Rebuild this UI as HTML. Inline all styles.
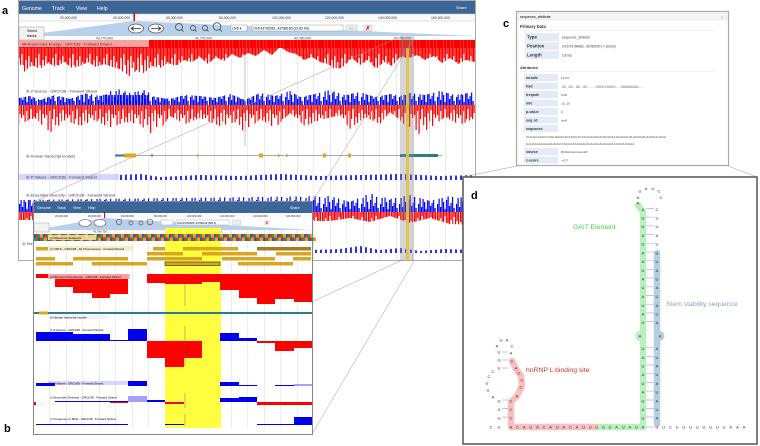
<!DOCTYPE html>
<html><head><meta charset="utf-8"><style>
html,body{margin:0;padding:0;background:#fff;width:760px;height:446px;overflow:hidden}
svg{display:block;font-family:"Liberation Sans",sans-serif}
</style></head><body>
<svg width="760" height="446" viewBox="0 0 760 446" xmlns="http://www.w3.org/2000/svg">
<defs>
<pattern id="pr" width="3" height="10" patternUnits="userSpaceOnUse"><rect width="3" height="10" fill="#ff7070"/><rect width="2" height="10" fill="#f00"/></pattern>
<pattern id="pb" width="3" height="10" patternUnits="userSpaceOnUse"><rect width="3" height="10" fill="#8c8cff"/><rect width="2" height="10" fill="#0000ee"/></pattern>
<pattern id="pm" x="0" y="40" width="17" height="60" patternUnits="userSpaceOnUse">
<g fill="#f00"><rect x="0" width="1.2" height="30"/><rect x="1.4" width="1.2" height="18"/><rect x="2.8" width="1.2" height="37"/><rect x="4.2" width="1.2" height="14"/><rect x="5.6" width="1.2" height="25"/><rect x="7" width="1.2" height="34"/><rect x="8.4" width="1.2" height="20"/><rect x="9.8" width="1.2" height="37"/><rect x="11.2" width="1.2" height="16"/><rect x="12.6" width="1.2" height="28"/><rect x="14" width="1.2" height="22"/><rect x="15.4" width="1.4" height="37"/></g>
<g fill="#ff8a8a"><rect x="1.2" width="0.3" height="20"/><rect x="4" width="0.3" height="24"/><rect x="8.2" width="0.3" height="26"/><rect x="11" width="0.3" height="22"/></g>
</pattern>
<g id="bluebars"><g fill="#0000ee"><rect x="0" y="52" width="1.2" height="8"/><rect x="1.5" y="46" width="1.2" height="14"/><rect x="3" y="55" width="1.2" height="5"/><rect x="4.5" y="43" width="1.2" height="17"/><rect x="6" y="50" width="1.2" height="10"/><rect x="7.5" y="57" width="1.2" height="3"/><rect x="9" y="48" width="1.2" height="12"/><rect x="10.5" y="42" width="1.2" height="18"/><rect x="12" y="54" width="1.2" height="6"/><rect x="13.5" y="51" width="1.2" height="9"/><rect x="15" y="45" width="1.2" height="15"/><rect x="16.5" y="56" width="1.2" height="4"/></g>
<g fill="#9a9aff"><rect x="2.7" y="48" width="0.3" height="12"/><rect x="8.8" y="44" width="0.3" height="16"/><rect x="14.8" y="47" width="0.3" height="13"/></g></g>
<g id="redbars"><g fill="#f00"><rect x="0" width="1.2" height="10"/><rect x="1.5" width="1.2" height="25"/><rect x="3" width="1.2" height="6"/><rect x="4.5" width="1.2" height="30"/><rect x="6" width="1.2" height="14"/><rect x="7.5" width="1.2" height="4"/><rect x="9" width="1.2" height="20"/><rect x="10.5" width="1.2" height="12"/><rect x="12" width="1.2" height="28"/><rect x="13.5" width="1.2" height="8"/><rect x="15" width="1.2" height="16"/><rect x="16.5" width="1.2" height="5"/><rect x="18" width="1.2" height="22"/><rect x="19.5" width="1.2" height="9"/><rect x="21" width="1.2" height="13"/></g>
<g fill="#ff8a8a"><rect x="2.8" width="0.4" height="18"/><rect x="8.8" width="0.4" height="24"/><rect x="15" width="0.4" height="26"/></g></g>
<pattern id="pzb" x="0" y="45" width="19" height="60" patternUnits="userSpaceOnUse"><use href="#bluebars"/></pattern>
<pattern id="pzr" x="0" y="105" width="23" height="60" patternUnits="userSpaceOnUse"><use href="#redbars"/></pattern>
<pattern id="pzb2" x="0" y="152" width="19" height="60" patternUnits="userSpaceOnUse"><use href="#bluebars"/></pattern>
<pattern id="pzr2" x="0" y="212" width="23" height="60" patternUnits="userSpaceOnUse"><use href="#redbars"/></pattern>
<pattern id="pb2" width="5" height="10" patternUnits="userSpaceOnUse"><rect width="5" height="10" fill="#fff"/><rect width="2" height="10" fill="#3030e0"/></pattern>
<pattern id="ref" width="9" height="4" patternUnits="userSpaceOnUse"><rect width="2" height="4" fill="#e03030"/><rect x="2" width="2" height="4" fill="#30a030"/><rect x="4" width="3" height="4" fill="#f0a020"/><rect x="7" width="2" height="4" fill="#3050d0"/></pattern>
<pattern id="grid" width="16.5" height="10" patternUnits="userSpaceOnUse"><rect x="0" width="0.6" height="10" fill="#ddd"/></pattern>
</defs>

<!-- ===== Panel a ===== -->
<text x="2" y="14" font-size="11" font-weight="bold">a</text>
<rect x="18.5" y="0.5" width="457" height="260" fill="#fff" stroke="#aaa"/>
<rect x="19" y="40" width="456" height="220" fill="url(#grid)"/>
<rect x="19" y="1" width="456" height="13" fill="#3c6698"/>
<g fill="#fff" font-size="5.2"><text x="22" y="10">Genome</text><text x="52" y="10">Track</text><text x="76" y="10">View</text><text x="97" y="10">Help</text><text x="456" y="9" font-size="4">Share</text></g>
<rect x="19" y="14" width="456" height="7" fill="#fafafa" stroke="#ccc" stroke-width="0.5"/>
<g font-size="3.4" fill="#333"><text x="60" y="19">20,000,000</text><text x="113" y="19">40,000,000</text><text x="166" y="19">60,000,000</text><text x="219" y="19">80,000,000</text><text x="272" y="19">100,000,000</text><text x="325" y="19">120,000,000</text><text x="378" y="19">140,000,000</text><text x="431" y="19">160,000,000</text></g>
<rect x="133.5" y="13" width="1.5" height="8" fill="#e00"/>
<polygon points="19,36 134,21 475,36" fill="#b9d0ea"/>
<rect x="19" y="27" width="25" height="13" fill="#f2f2f2" stroke="#999" stroke-width="0.5"/>
<text x="27" y="32" font-size="3.6">Select</text><text x="27" y="37" font-size="3.6">tracks</text>
<ellipse cx="136" cy="28.5" rx="7.5" ry="4.5" fill="#fff" stroke="#555" stroke-width="0.8"/>
<ellipse cx="156" cy="28.5" rx="7.5" ry="4.5" fill="#fff" stroke="#555" stroke-width="0.8"/>
<path d="M131 28.5h10M131 28.5l3-2M131 28.5l3 2M151 28.5h10M161 28.5l-3-2M161 28.5l-3 2" stroke="#333" stroke-width="0.8"/>
<g fill="none" stroke="#555" stroke-width="0.9"><circle cx="179" cy="27" r="3.5"/><circle cx="193" cy="28" r="2.5"/><circle cx="205" cy="28" r="2.5"/><circle cx="217" cy="26.5" r="3.8"/><path d="M181.5 29.5l2 2M195 30l1.5 1.5M207 30l1.5 1.5M220 29.5l2 2"/></g>
<rect x="231" y="25" width="16" height="6" fill="#fff" stroke="#999" stroke-width="0.5"/><text x="232" y="29.5" font-size="3.4">chr6 ▾</text>
<rect x="252" y="25" width="91" height="6" fill="#fff" stroke="#999" stroke-width="0.5"/><text x="253" y="29.5" font-size="3.4">chr6:43765361..43788180 (22.82 Kb)</text>
<rect x="346" y="25" width="11" height="6" fill="#eee" stroke="#bbb" stroke-width="0.5"/><text x="349" y="29.5" font-size="3.4" fill="#999">Go</text>
<rect x="364" y="25" width="8" height="6" fill="#eee" stroke="#bbb" stroke-width="0.5"/><text x="365.5" y="30" font-size="5.5" fill="#e00" font-weight="bold">✗</text>
<g font-size="3.4" fill="#333"><text x="96" y="39.5">43,770,000</text><text x="195" y="39.5">43,775,000</text><text x="294" y="39.5">43,780,000</text><text x="394" y="39.5">43,785,000</text></g>
<rect x="19" y="40" width="456" height="8" fill="#f00"/>
<polygon fill="url(#pm)" points="19,40 475,40 475,62 466,60 458,64 450,58 442,63 434,56 425,60 417,55 409,58 400,57 392,66 384,62 376,69 368,60 360,65 352,58 344,66 336,70 328,64 320,62 312,57 304,60 296,54 288,52 280,47 272,55 264,50 256,56 248,53 240,58 232,54 224,61 216,57 208,64 200,57 192,62 184,60 176,66 168,63 160,68 152,66 144,73 136,71 128,77 120,69 112,67 104,64 96,67 88,62 80,66 72,68 64,62 56,67 48,63 40,69 32,65 24,72 19,62"/>
<rect x="19" y="40" width="130" height="7" fill="#f7b0b0" opacity="0.9"/>
<text x="22" y="45.5" font-size="4" fill="#333">Minimum Free Energy - GRCh38 - Forward Strand</text>
<polygon fill="url(#pzb)" points="19,105 19,98 30,96 40,100 55,95 70,99 85,93 100,96 105,95 115,88 130,93 145,90 155,97 170,99 185,95 200,96 215,98 230,94 245,100 260,93 275,96 290,91 300,97 315,94 330,90 345,95 360,92 375,97 390,94 400,96 410,93 425,95 440,91 455,95 475,92 475,105"/>
<rect x="103" y="95" width="45" height="10" fill="url(#pb)" opacity="0.8"/>
<polygon fill="url(#pzr)" points="19,105 475,105 475,118 460,125 445,117 430,128 415,136 400,120 390,112 380,124 365,117 350,129 340,115 320,120 305,126 290,113 275,128 260,119 245,133 235,122 220,126 200,118 185,124 170,116 160,130 150,135 140,124 125,122 110,128 95,120 80,126 65,120 50,133 35,118 19,124"/>
<line x1="19" y1="105" x2="475" y2="105" stroke="#555" stroke-width="0.4"/>
<rect x="19" y="87" width="90" height="7" fill="#fff" opacity="0.6"/>
<text x="26" y="92.5" font-size="4" fill="#333">◎ Z-Scores - GRCh38 - Forward Strand</text>
<line x1="245" y1="43" x2="245" y2="146" stroke="#666" stroke-width="0.4"/>
<rect x="19" y="152" width="75" height="7" fill="#fff"/>
<text x="26" y="157.5" font-size="4" fill="#333">◎ Human transcript models</text>
<line x1="115" y1="155.5" x2="442" y2="155.5" stroke="#555" stroke-width="0.6"/>
<rect x="115" y="154.5" width="10" height="2" fill="#2a7d8c"/><rect x="124" y="153.5" width="12" height="4" fill="#e0a820"/>
<rect x="151" y="154.5" width="2" height="2" fill="#2a7d8c"/><rect x="197" y="154" width="1.5" height="3" fill="#e0a820"/>
<rect x="259" y="153.5" width="4" height="4" fill="#e0a820"/><rect x="278" y="154" width="1.5" height="3" fill="#e0a820"/><rect x="286" y="154" width="1.5" height="3" fill="#e0a820"/>
<rect x="323" y="153.5" width="3" height="4" fill="#e0a820"/><rect x="348" y="153.5" width="3" height="4" fill="#e0a820"/>
<rect x="400" y="154" width="38" height="3" fill="#2a7d8c"/>
<polygon fill="url(#pb2)" points="118,180 118,175 140,174 160,177 200,175 240,176 280,174 320,176 360,175 400,174 440,176 475,175 475,180"/>
<rect x="19" y="174" width="100" height="6" fill="#aab0ff" opacity="0.5"/>
<text x="26" y="178.5" font-size="4" fill="#333">◎ P-Values - GRCh38 - Forward Strand</text>
<text x="26" y="196.5" font-size="4" fill="#333">◎ Ensemble Diversity - GRCh38 - Forward Strand</text>
<polygon fill="url(#pzb2)" points="19,212 19,200 330,196 350,202 370,193 390,199 410,195 430,201 450,196 475,199 475,212"/>
<polygon fill="url(#pzr2)" points="19,212 475,212 475,225 450,224 430,218 410,223 390,216 370,222 350,218 330,221 19,220"/>
<text x="22" y="245" font-size="4" fill="#333">◎ Fre</text>
<polygon fill="url(#pb2)" points="312,253 312,250 340,249 360,246 380,250 400,248 420,251 445,249 475,250 475,253"/>
<rect x="400" y="36" width="14" height="225" fill="#888" opacity="0.35"/>
<rect x="406" y="48" width="3" height="213" fill="#e6c040" opacity="0.9"/>
<line x1="397" y1="38" x2="33" y2="202" stroke="#999" stroke-width="0.5"/>
<line x1="414" y1="38" x2="312" y2="202" stroke="#999" stroke-width="0.5"/>
<line x1="400" y1="261" x2="312" y2="302" stroke="#999" stroke-width="0.5"/>
<line x1="414" y1="261" x2="312" y2="434" stroke="#999" stroke-width="0.5"/>

<!-- ===== Panel b ===== -->
<rect x="33.5" y="201.5" width="279" height="233" fill="#fff" stroke="#888"/>
<rect x="34" y="228" width="278" height="200" fill="url(#grid)"/>
<rect x="34" y="202" width="278" height="11" fill="#3c6698"/>
<g fill="#fff" font-size="3.6"><text x="37" y="209">Genome</text><text x="57" y="209">Track</text><text x="73" y="209">View</text><text x="88" y="209">Help</text><text x="290" y="209">Share</text></g>
<rect x="34" y="213" width="278" height="5" fill="#fafafa"/>
<g font-size="2.6" fill="#333"><text x="55" y="217">20,000,000</text><text x="88" y="217">40,000,000</text><text x="121" y="217">60,000,000</text><text x="154" y="217">80,000,000</text><text x="187" y="217">100,000,000</text><text x="220" y="217">120,000,000</text><text x="253" y="217">140,000,000</text><text x="286" y="217">160,000,000</text></g>
<rect x="104" y="212" width="1" height="6" fill="#e00"/>
<polygon points="34,230 104,218 312,230" fill="#b9d0ea"/>
<rect x="34" y="223" width="15" height="9" fill="#f2f2f2" stroke="#999" stroke-width="0.4"/>
<ellipse cx="85" cy="223" rx="6" ry="3.5" fill="#fff" stroke="#555" stroke-width="0.6"/><ellipse cx="100" cy="223" rx="6" ry="3.5" fill="#fff" stroke="#555" stroke-width="0.6"/>
<g fill="none" stroke="#555" stroke-width="0.7"><circle cx="119" cy="222" r="2.6"/><circle cx="131" cy="223" r="2"/><circle cx="141" cy="223" r="2"/><circle cx="150" cy="222" r="2.8"/></g>
<rect x="161" y="220" width="12" height="5" fill="#fff" stroke="#999" stroke-width="0.4"/>
<rect x="176" y="220" width="53" height="5" fill="#fff" stroke="#999" stroke-width="0.4"/><text x="177" y="223.8" font-size="2.6">chr6:43784526..43785219 (582 b)</text>
<rect x="232" y="220" width="9" height="5" fill="#eee" stroke="#bbb" stroke-width="0.4"/>
<rect x="264" y="220" width="6" height="5" fill="#eee"/><text x="265" y="224.5" font-size="4.5" fill="#e00">✗</text>
<g font-size="2.8" fill="#333"><text x="93" y="232.5">43,784,700</text><text x="208" y="232.5">43,785,000</text></g>
<rect x="165" y="228" width="56" height="200" fill="#ffff40"/>
<rect x="34" y="234" width="278" height="3.5" fill="url(#ref)"/>
<rect x="34" y="237.5" width="278" height="3.5" fill="url(#ref)" transform="translate(4,0)"/>
<rect x="34" y="237.5" width="4" height="3.5" fill="#30a030"/>
<rect x="48" y="235" width="48" height="5" fill="#f4e8a0" opacity="0.85"/>
<text x="50" y="239" font-size="3">◎ Reference Sequence</text>
<g fill="#daa520">
<rect x="36" y="247" width="12" height="3.5"/><rect x="153" y="247" width="12" height="3.5"/><rect x="183" y="247" width="55" height="3.5"/><rect x="257" y="247" width="54" height="3.5" fill="#a87c1c"/>
<rect x="147" y="252" width="36" height="3.5"/><rect x="202" y="252" width="55" height="3.5"/><rect x="276" y="252" width="35" height="3.5"/>
<rect x="36" y="257" width="19" height="3.5"/><rect x="73" y="257" width="55" height="3.5"/><rect x="147" y="257" width="55" height="3.5"/><rect x="222" y="257" width="53" height="3.5"/><rect x="293" y="257" width="18" height="3.5"/>
<rect x="36" y="262" width="37" height="3.5"/><rect x="92" y="262" width="55" height="3.5"/><rect x="165" y="262" width="55" height="3.5" stroke="#222" stroke-width="0.6"/><rect x="238" y="262" width="55" height="3.5"/>
</g>
<rect x="48" y="246" width="85" height="5" fill="#f6ebc0" opacity="0.85"/>
<text x="50" y="250" font-size="3">◎ ORFS - GRCh38 - All Chromosome - Forward Strand</text>
<g fill="#f00">
<rect x="36" y="274" width="19" height="4"/><rect x="55" y="274" width="18" height="13"/><rect x="73" y="274" width="19" height="19"/><rect x="92" y="274" width="18" height="24"/><rect x="110" y="274" width="18" height="20"/>
<rect x="147" y="274" width="18" height="9"/><rect x="165" y="274" width="19" height="10"/><rect x="184" y="274" width="18" height="10"/><rect x="202" y="274" width="18" height="8"/><rect x="220" y="274" width="19" height="16"/>
<rect x="239" y="274" width="18" height="24"/><rect x="257" y="274" width="18" height="30"/><rect x="275" y="274" width="19" height="25"/><rect x="294" y="274" width="18" height="28"/>
</g>
<rect x="48" y="274" width="82" height="5" fill="#f7b0b0" opacity="0.9"/>
<text x="50" y="278" font-size="3">◎ Minimum Free Energy - GRCh38 - Forward Strand</text>
<line x1="185" y1="274" x2="185" y2="306" stroke="#555" stroke-width="0.4"/>
<rect x="34" y="312" width="278" height="2" fill="#2a7d8c"/><rect x="39" y="311.5" width="9" height="3" fill="#e0a820"/>
<rect x="48" y="315" width="60" height="4" fill="#eef4f4"/>
<text x="50" y="318.5" font-size="3">◎ Human transcript models</text>
<text x="50" y="331" font-size="3">◎ Z-Scores - GRCh38 - Forward Strand</text>
<g fill="#0000ee">
<rect x="36" y="332" width="19" height="9"/><rect x="55" y="332" width="18" height="9"/><rect x="73" y="334" width="19" height="7"/><rect x="92" y="334" width="18" height="7"/><rect x="110" y="340" width="18" height="1"/><rect x="128" y="329" width="19" height="12"/>
<rect x="220" y="333" width="19" height="8"/><rect x="239" y="338" width="18" height="3"/>
</g>
<g fill="#f00">
<rect x="147" y="341" width="18" height="17"/><rect x="165" y="341" width="19" height="26"/><rect x="184" y="341" width="18" height="17"/>
<rect x="257" y="341" width="18" height="2"/><rect x="275" y="341" width="19" height="10"/><rect x="294" y="341" width="18" height="7"/>
</g>
<line x1="185" y1="326" x2="185" y2="366" stroke="#555" stroke-width="0.4"/>
<rect x="48" y="381" width="80" height="4" fill="#b8bcff" opacity="0.6"/>
<text x="50" y="384.5" font-size="3">◎ P-Values - GRCh38 - Forward Strand</text>
<g fill="#0000ee"><rect x="36" y="383" width="19" height="3"/><rect x="128" y="381" width="19" height="5"/><rect x="220" y="382" width="19" height="4"/><rect x="239" y="385" width="18" height="1"/><rect x="275" y="385" width="19" height="1"/></g>
<rect x="294" y="384" width="18" height="2" fill="#a0a0ff"/>
<text x="50" y="398.5" font-size="3">◎ Ensemble Diversity - GRCh38 - Forward Strand</text>
<rect x="128" y="396" width="19" height="6" fill="#a0a0ff"/>
<g fill="#0000ee"><rect x="147" y="400" width="18" height="2"/><rect x="220" y="398" width="19" height="4"/><rect x="239" y="397" width="18" height="5"/><rect x="55" y="401" width="73" height="1"/></g>
<g fill="#f00"><rect x="34" y="402" width="2" height="3"/><rect x="165" y="402" width="19" height="2"/><rect x="257" y="402" width="55" height="3"/><rect x="110" y="402" width="18" height="1"/></g>
<line x1="185" y1="393" x2="185" y2="408" stroke="#555" stroke-width="0.4"/>
<text x="50" y="420" font-size="3">◎ Frequency of MFE - GRCh38 - Forward Strand</text>
<g fill="#0000ee"><rect x="36" y="424" width="92" height="1"/><rect x="165" y="424" width="19" height="1"/><rect x="257" y="424" width="37" height="1"/><rect x="294" y="417" width="18" height="8"/></g>
<line x1="185" y1="414" x2="185" y2="426" stroke="#555" stroke-width="0.4"/>
<text x="4" y="432" font-size="11" font-weight="bold">b</text>

<!-- ===== Panel c ===== -->
<text x="503" y="27" font-size="11" font-weight="bold">c</text>
<rect x="516.5" y="11.5" width="212" height="154" fill="#fff" stroke="#aaa" stroke-width="1.2"/>
<rect x="518" y="13" width="209" height="7" fill="#f4f4f4" stroke="#ddd" stroke-width="0.4"/>
<text x="520" y="18" font-size="3.6">sequence_attribute</text><text x="721" y="18.5" font-size="4" fill="#888">×</text>
<text x="520" y="28" font-size="4.2" font-weight="bold" fill="#333">Primary Data</text>
<line x1="520" y1="30.5" x2="716" y2="30.5" stroke="#e4e4e4" stroke-width="0.5"/>
<g fill="#e4ebf7"><rect x="525" y="33" width="34" height="8"/><rect x="525" y="42" width="34" height="8"/><rect x="525" y="51" width="34" height="8"/></g>
<g font-size="4.4" font-weight="bold" fill="#333"><text x="527" y="38.5">Type</text><text x="527" y="47.5">Position</text><text x="527" y="56.5">Length</text></g>
<g font-size="3.3" fill="#444"><text x="562" y="38.5">sequence_attribute</text><text x="562" y="47.5">chr6:43784881..43785000 (+ strand)</text><text x="562" y="56.5">120 bp</text></g>
<text x="520" y="69" font-size="3.8" font-weight="bold" fill="#333">Attributes</text>
<line x1="520" y1="71.5" x2="716" y2="71.5" stroke="#e4e4e4" stroke-width="0.5"/>
<g fill="#e4ebf7"><rect x="524" y="74" width="34" height="7"/><rect x="524" y="82.5" width="34" height="7"/><rect x="524" y="91" width="34" height="7"/><rect x="524" y="99.5" width="34" height="7"/><rect x="524" y="108" width="34" height="7"/><rect x="524" y="116.5" width="34" height="7"/><rect x="524" y="125" width="34" height="7"/><rect x="524" y="148" width="34" height="7"/><rect x="524" y="156.5" width="34" height="7"/></g>
<g font-size="3.6" font-weight="bold" fill="#333"><text x="526" y="79">mradiv</text><text x="526" y="87.5">fold</text><text x="526" y="96">freqmfe</text><text x="526" y="104.5">mfe</text><text x="526" y="113">p-value</text><text x="526" y="121.5">seq_id</text><text x="526" y="130">sequence</text><text x="526" y="153">source</text><text x="526" y="161.5">z-score</text></g>
<g font-size="3.1" fill="#444"><text x="561" y="79">14.64</text><text x="561" y="87.5">.((((...((((....))))...))))..........((((((((.(((((((((.(......))))))))))))))))).......</text><text x="561" y="96">0.02</text><text x="561" y="104.5">-21.10</text><text x="561" y="113">0</text><text x="561" y="121.5">chr6</text>
<text x="526" y="138">CUGGGAUUCCUGUAGACACACCCACCCAGAUACAUACAUUUAUAUAUAUAUAUAUAUAUAUAUA</text>
<text x="526" y="145">UAUAAAAAUAUAUAUUCUCUAUUUAUAUAUAUAUAUAUAUUUUUUUUUAA</text>
<text x="561" y="153">RNAstructurome20</text><text x="561" y="161.5">-4.07</text></g>
<line x1="517" y1="166" x2="463" y2="177" stroke="#999" stroke-width="0.5"/>
<line x1="728" y1="166" x2="757" y2="177" stroke="#999" stroke-width="0.5"/>

<!-- ===== Panel d ===== -->
<rect x="463" y="177" width="294" height="267" fill="#fff" stroke="#555" stroke-width="1.5"/>
<text x="471" y="199" font-size="11" font-weight="bold">d</text>
<path d="M638 205 L643 212 L643 427 L597 427" fill="none" stroke="#b9f0bf" stroke-width="6.5" stroke-linejoin="round" stroke-linecap="round"/>
<ellipse cx="640" cy="336" rx="4.5" ry="5" fill="#b9f0bf"/>
<path d="M657 253 L657 424" fill="none" stroke="#b6cfe0" stroke-width="6.5" stroke-linecap="round"/>
<ellipse cx="660" cy="336" rx="4.5" ry="5" fill="#b6cfe0"/>
<path d="M512 361 L516 369 L521 376 L522 386 L517 396 L511 402 L511 427 L595 427" fill="none" stroke="#f8c0c0" stroke-width="6.5" stroke-linejoin="round" stroke-linecap="round"/>
<g stroke="#aab2ee" stroke-width="0.7">
<path d="M646 417h8M646 408.6h8M646 400h8M646 391.2h8M646 382.5h8M646 373.8h8M646 365h8M646 356.4h8M646 347.7h8M646 321.6h8M646 312.9h8M646 304.2h8M646 295.5h8M646 286.8h8M646 278h8M646 269.4h8M646 260.7h8M646 252h8M646 243.3h8M646 234.6h8M646 225.9h8M646 217.2h8M646 208.5h8"/>
<path d="M502 417h6M502 408.6h6M502 400h6M502 368h6M502 360h6M502 352h6"/>
<path d="M646 427h8"/>
</g>
<g font-size="4" fill="#222" text-anchor="middle">
<text x="491 499 511 517.6 524.2 530.8 537.4 544 550.6 557.2 563.8 570.4 577 583.6 590.2 596.8 603.4 610 616.6 623.2 629.8 636.4 643" y="428.5">CUACAUACAUACAUUUGUAUAUA</text>
<text x="657 663.7 670.4 677.1 683.8 690.5 697.2 703.9 710.6 717.3 724 730.7 737.4 744.1" y="428.5">UUCUUUUUUUUAAA</text>
<text x="643" y="419.5">U</text><text x="643" y="411">A</text><text x="643" y="402.5">U</text><text x="643" y="393.5">A</text><text x="643" y="385">U</text><text x="643" y="376">A</text><text x="643" y="367.5">U</text><text x="643" y="359">A</text><text x="643" y="350">U</text><text x="640" y="337.5">A</text><text x="643" y="324">U</text><text x="643" y="315.5">A</text><text x="643" y="307">U</text><text x="643" y="298">A</text><text x="643" y="289">U</text><text x="643" y="280.5">A</text><text x="643" y="272">U</text><text x="643" y="263">A</text><text x="643" y="254.5">A</text><text x="643" y="245.5">U</text><text x="643" y="237">A</text><text x="643" y="228">U</text><text x="643" y="219.5">U</text><text x="643" y="211">A</text><text x="638" y="204.5">A</text>
<text x="657" y="419.5">A</text><text x="657" y="411">U</text><text x="657" y="402.5">A</text><text x="657" y="393.5">U</text><text x="657" y="385">A</text><text x="657" y="376">U</text><text x="657" y="367.5">A</text><text x="657" y="359">U</text><text x="657" y="350">A</text><text x="660" y="337.5">A</text><text x="657" y="324">A</text><text x="657" y="315.5">U</text><text x="657" y="307">A</text><text x="657" y="298">U</text><text x="657" y="289">A</text><text x="657" y="280.5">U</text><text x="657" y="272">A</text><text x="657" y="263">U</text><text x="657" y="254.5">U</text><text x="657" y="245.5">U</text><text x="657" y="237">A</text><text x="657" y="228">U</text><text x="657" y="219.5">U</text><text x="657" y="211">C</text>
<text x="638" y="199">A</text><text x="640" y="192.5">U</text><text x="646" y="190">A</text><text x="653" y="190">U</text><text x="659" y="192.5">C</text><text x="661" y="199">C</text>
<text x="499" y="419.5">G</text><text x="499" y="411">G</text><text x="499" y="402.5">G</text><text x="493" y="398.5">A</text><text x="488" y="391.5">U</text><text x="487" y="384.5">U</text><text x="489" y="378">C</text><text x="493" y="373">C</text><text x="499" y="369.5">U</text><text x="499" y="361.5">G</text><text x="499" y="353.5">U</text><text x="497" y="347.5">A</text><text x="501" y="341.5">G</text><text x="507" y="341.5">A</text>
<text x="511" y="419.5">C</text><text x="511" y="411">C</text><text x="511" y="402.5">C</text><text x="517" y="397.5">A</text><text x="521" y="388.5">C</text><text x="522" y="381.5">C</text><text x="519" y="374.5">C</text><text x="516" y="369.5">A</text><text x="512" y="362.5">C</text><text x="511" y="354.5">A</text><text x="512" y="347.5">C</text>
</g>
<text x="573" y="229" font-size="6.8" fill="#3cd040">GAIT Element</text>
<text x="666" y="306" font-size="6.8" fill="#8aa4b4">Stem stability sequence</text>
<text x="526" y="372" font-size="6.8" fill="#d03030">hnRNP L binding site</text>
</svg>
</body></html>
